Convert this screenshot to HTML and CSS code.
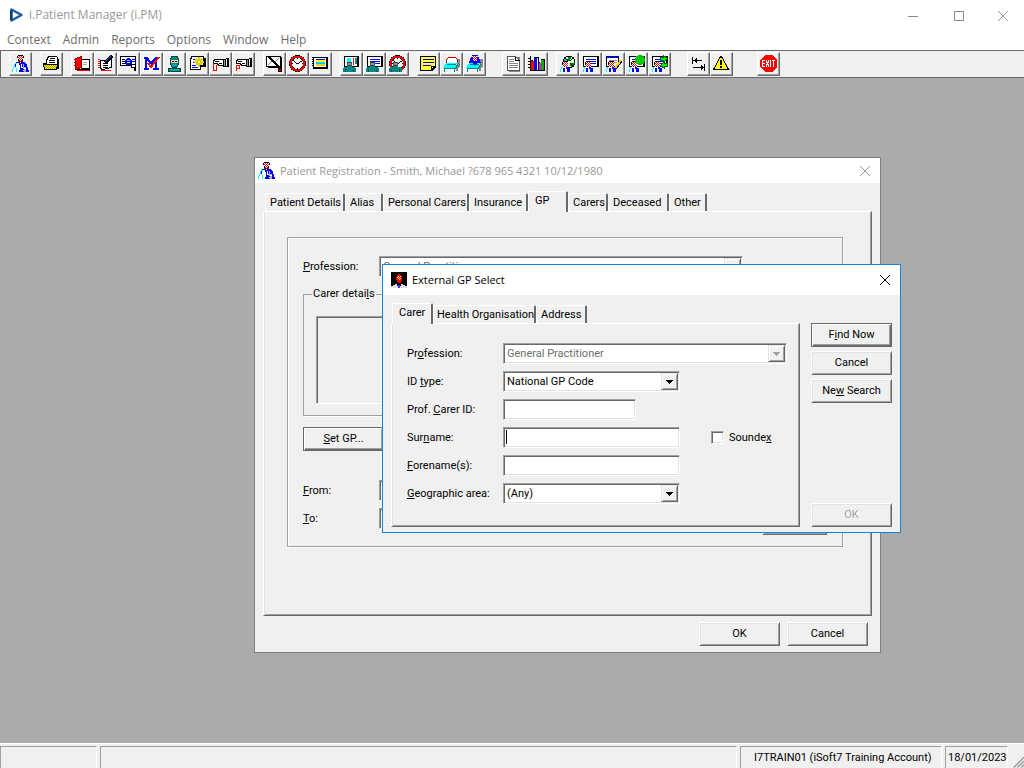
FILE: index.html
```html
<!DOCTYPE html>
<html lang="en">
<head>
    <meta charset="UTF-8">
    <meta name="viewport" content="width=device-width, initial-scale=1.0">
    <title>i.Patient Manager (i.PM)</title>
    <link rel="stylesheet" href="styles.css">
</head>
<body>
    <!-- Shared icons -->
    <svg class="defs" width="0" height="0">
        <defs>
            <pattern id="skin" width="2" height="2" patternUnits="userSpaceOnUse">
                <path fill="#fff" d="M0 0h2v2H0z"/><path fill="#f00" d="M0 0h1v1H0zM1 1h1v1H1z"/>
            </pattern>
            <pattern id="gold" width="2" height="2" patternUnits="userSpaceOnUse">
                <path fill="#ff0" d="M0 0h2v2H0z"/><path fill="#a90" d="M0 0h1v1H0zM1 1h1v1H1z"/>
            </pattern>
            <symbol id="doctor" viewBox="0 0 17 17">
                <path fill="#00f" d="M4 7h8l3 3 2 7H0l2-7z"/>
                <path fill="#0ff" d="M3 8h2v1H3zM2 9h1v3H2zM1 12h1v3H1zM0 14h1v3H0zM4 13h1v4H4z"/>
                <path fill="#fff" d="M5 8h2v2h1v4l-1 3H5v-4H4V9h1zM9 9h1v4H9zM2 12h2v5H1v-3h1z"/>
                <path fill="#aaa" d="M11 9h1v3h2v2h-3zM12 14h2v3h-2z"/>
                <path fill="#fff" d="M10 12h1v1h-1zM12 13h2v1h-2zM11 15h1v1h-1z"/>
                <path fill="url(#skin)" d="M6 1h5v6H9v1H8V7H6z"/>
                <path fill="#000" d="M6 0h5v1H6zM5 1h1v2H5zM11 1h1v2h-1zM6 4h1v2H6zM10 4h1v2h-1zM7 6h1v2H7zM9 6h1v2H9z"/>
            </symbol>
            <symbol id="nurse" viewBox="0 0 17 17">
                <path fill="#088" d="M4 7h5v5H4zM1 12h11v1h1v4H0v-4h1z"/>
                <path fill="#055" d="M4 7h5v1H4zM4 10h5v1H4zM2 14h1v3H2zM10 14h1v3h-1z"/>
                <path fill="#f66" d="M5 8h3v2H5z"/>
            </symbol>
            <symbol id="minidoc" viewBox="0 0 17 17">
                <path fill="#0ff" d="M2 12h2v2H2zM1 14h1v3H1z"/>
                <path fill="#fff" d="M3 12h6v5H2v-3h1z"/>
                <path fill="#00f" d="M7 11h2v2h2v4H8v-3H7zM4 13h2v4H4z"/>
                <path fill="url(#skin)" d="M4 7h5v5H4z"/>
                <path fill="#000" d="M4 6h5v1H4zM3 7h1v3H3zM5 11h1v1H5z"/>
            </symbol>
            <symbol id="card" viewBox="0 0 17 17">
                <path fill="#000" d="M1 1h16v11H1z"/><path fill="#fff" d="M2 2h13v9H2z"/>
                <path fill="#00f" d="M4 4h10v1H4zM4 6h10v1H4zM8 8h6v1H8z"/>
            </symbol>
            <symbol id="clock" viewBox="0 0 17 17">
                <circle cx="8.5" cy="8.5" r="7" fill="#fff" stroke="#000" stroke-width="3"/>
                <circle cx="8.5" cy="8.5" r="7" fill="none" stroke="#f00" stroke-width="2"/>
                <path fill="none" stroke="#000" d="M4 5l4 4 5-3M8.5 3v1M8.5 13v1M3 8.5h1M13 8.5h1"/>
            </symbol>
            <symbol id="hand" viewBox="0 0 17 17">
                <path fill="#fff" stroke="#000" d="M1.500 5.500l2-1h8v6h-5l-1-2h-4z"/>
                <path fill="none" stroke="#000" d="M3 6.500h4M7 8.500h3"/>
                <path fill="#999" stroke="#000" d="M11.500 4.500h2v7h-2z"/><path fill="#000" d="M14 3h3v1h-3zM15 4h2v8h-2zM14 11h1v1h-1z"/>
            </symbol>
            <symbol id="bed" viewBox="0 0 17 17">
                <path fill="#888" d="M14 4h3v7l-2 2v3h-2v-4l1-2z"/>
                <path fill="#0ff" d="M3 8h11l-2 5H0z"/>
                <path fill="none" stroke="#088" d="M.500 13.500h12l2-4M1.500 14v3M11.500 14v3M4 9.500h9"/>
            </symbol>
            <symbol id="close" viewBox="0 0 12 12">
                <path fill="none" stroke="currentColor" d="M1 1l10 10M11 1L1 11"/>
            </symbol>
            <symbol id="arrow" viewBox="0 0 7 4">
                <path fill="currentColor" d="M0 0h7v1H6v1H5v1H4v1H3V3H2V2H1V1H0z"/>
            </symbol>
        </defs>
    </svg>

    <div class="app">
        <header class="titlebar">
            <svg class="logo" viewBox="0 0 14 14"><path fill="none" stroke="#1d5c9e" stroke-width="2.500" stroke-linejoin="round" d="M2.500 1.500l10 5.500-10 5.500z"/><path stroke="#153b6b" stroke-width="2" d="M2 2v10"/></svg>
            <h1>i.Patient Manager (i.PM)</h1>
            <div class="window-buttons">
                <button type="button" aria-label="Minimize"><svg viewBox="0 0 12 12"><path stroke="#888" d="M1 6.500h10"/></svg></button>
                <button type="button" aria-label="Maximize"><svg viewBox="0 0 12 12"><path fill="none" stroke="#888" d="M1.500 1.500h9v9h-9z"/></svg></button>
                <button type="button" aria-label="Close"><svg><use href="#close"/></svg></button>
            </div>
        </header>

        <nav class="menu">
            <a href="#">Context</a>
            <a href="#">Admin</a>
            <a href="#">Reports</a>
            <a href="#">Options</a>
            <a href="#">Window</a>
            <a href="#">Help</a>
        </nav>

        <div class="toolbar">
            <div class="tools">
                <button type="button" aria-label="Patient"><svg><use href="#doctor"/></svg></button>
            </div>
            <div class="tools">
                <button type="button" aria-label="Case notes"><svg viewBox="0 0 17 17"><path fill="#fff" stroke="#000" d="M5.500 1.500h8l1 1v7h-11v-4z"/><path stroke="#000" d="M7 3.500h5M6 5.500h6M6 7.500h6"/><path fill="#000" d="M14 4h2v10h-2zM0 8h3v2H0z"/><path fill="url(#gold)" stroke="#000" d="M.500 9.500h14l-1 5h-12z"/></svg></button>
            </div>
            <div class="tools">
                <button type="button" aria-label="Open book"><svg viewBox="0 0 17 17"><path fill="#000" d="M7 4h9v12H3v-2h4z"/><path fill="#fff" d="M8 5h7v8H8z"/><path fill="#aaa" d="M9 7h4v1H9zM9 9h4v1H9z"/><path fill="#f00" stroke="#800" d="M1.500 3.500l6-2v11l-6 2z"/><path stroke="#f00" d="M3 15.500h12M1 4.500h-1M1 7.500h-1M1 10.500h-1"/></svg></button>
                <button type="button" aria-label="Write book"><svg viewBox="0 0 17 17"><path fill="#fff" stroke="#000" d="M3.500 5.500l11-1v8l-9 2-2-1z"/><path stroke="#f00" stroke-width="2" stroke-dasharray="1 1" d="M2 4v10"/><path stroke="#000" d="M6 8.500h5M6 10.500h5M6 12.500h5"/><path stroke="#f00" d="M4 15.500h10"/><path stroke="#000" stroke-width="3" d="M8 8l7-7"/><path stroke="#06f" d="M8 7l6-6"/></svg></button>
                <button type="button" aria-label="Search"><svg viewBox="0 0 17 17"><path fill="#fff" stroke="#000" d="M.500 1.500h15v9H.500z"/><path stroke="#000" d="M2 4.500h3M2 6.500h3M2 8.500h3"/><circle cx="8.500" cy="6.500" r="3.500" fill="#00f"/><path stroke="#0ff" d="M7 5.500h3"/><path stroke="#ff0" d="M7 7.500h3"/><path stroke="#00c" d="M12 4.500h3M12 6.500h3"/><path fill="#fff" stroke="#000" d="M11.500 9.500h4v6h-1v-3h-3z"/></svg></button>
                <button type="button" aria-label="Measures"><svg viewBox="0 0 17 17"><path fill="#fff" d="M0 1h17v15H0z"/><path fill="#00f" d="M1 2h4l3 5 4-5h3v2h-1v9h2v2h-6v-2h2V6l-4 4-4-4v7h2v2H1v-2h1V4H1z"/><path fill="none" stroke="#f00" stroke-width="2" d="M5 8l3 4 8-10"/></svg></button>
                <button type="button" aria-label="Surgeon"><svg viewBox="0 0 17 17"><path fill="#088" stroke="#044" d="M5.500 1.500h6l1 3v5l-2 3h-4l-2-3v-5zM2.500 13.500h12v3h-12z"/><path fill="#fca" d="M5 5h7v3H5z"/><path fill="#000" d="M6 6h2v1H6zM9 6h2v1H9z"/><path fill="#0aa" d="M6 9h5v2H6zM4 14h9v2H4z"/></svg></button>
                <button type="button" aria-label="New event"><svg viewBox="0 0 17 17"><path fill="#000" d="M2 1h13v2h2v9h-5v3H1V3h1z"/><path fill="#fff" d="M3 2h11v8h-3v4H2V4h1z"/><path stroke="#00f" d="M4 4.500h3M4 7.500h3M3 10.500h4M3 12.500h6"/><path stroke="#dc0" stroke-width="2" d="M10 2v10M5 7h10M7 4l6 6M13 4l-6 6"/><path fill="#ff8" d="M9 6h2v2H9z"/></svg></button>
                <button type="button" aria-label="Refer out"><svg viewBox="0 0 17 17"><use href="#hand"/><path fill="none" stroke="#f00" d="M1.500 8v7h3v-5"/></svg></button>
                <button type="button" aria-label="Refer in"><svg viewBox="0 0 17 17"><use href="#hand"/><path fill="none" stroke="#f00" d="M1.500 16v-6h3v3h-3"/></svg></button>
            </div>
            <div class="tools">
                <button type="button" aria-label="Letter"><svg viewBox="0 0 17 17"><path fill="#000" d="M2 2h14v11H2z"/><path fill="#fff" d="M1 2h13v9H1z"/><path fill="none" stroke="#000" d="M.500 1.500h14v10H.500z"/><path fill="none" stroke="#777" d="M2 10l4-4M9 7l4-4"/><path stroke="#000" stroke-width="2" d="M3 2l11 11"/><path fill="#d00" stroke="#000" d="M12.500 13.500h3v3h-3z"/></svg></button>
                <button type="button" aria-label="Appointments"><svg><use href="#clock"/></svg></button>
                <button type="button" aria-label="Schedule"><svg viewBox="0 0 17 17"><path fill="#000" d="M1 2h15v12H1z"/><path fill="#fff" d="M2 3h12v9H2z"/><path stroke="#000" stroke-width="2" stroke-dasharray="1 1" d="M1 2v10"/><path fill="#00f" d="M4 4h9v1H4z"/><path fill="#ff0" d="M4 5h9v2H4z"/><path fill="#0cf" d="M4 7h9v2H4z"/><path fill="#fc0" d="M4 9h9v2H4z"/></svg></button>
            </div>
            <div class="tools">
                <button type="button" aria-label="Clinic list"><svg viewBox="0 0 17 17"><path fill="#000" d="M1 1h15v11H1z"/><path fill="#fff" d="M2 2h12v9H2z"/><path fill="#0ff" d="M4 3h4v4H4z"/><path fill="#f00" d="M10 3h1v7h-1z"/><path fill="#088" d="M12 3h2v6h-2z"/><use href="#nurse"/></svg></button>
                <button type="button" aria-label="Clinic card"><svg viewBox="0 0 17 17"><use href="#card"/><use href="#nurse"/></svg></button>
                <button type="button" aria-label="Clinic time"><svg viewBox="0 0 17 17"><use href="#clock"/><use href="#nurse"/></svg></button>
            </div>
            <div class="tools">
                <button type="button" aria-label="Notes"><svg viewBox="0 0 17 17"><path fill="#000" d="M0 1h16v11l-4 4H0z"/><path fill="#ff4" d="M1 2h14v9h-4v4H1z"/><path fill="#00a" d="M3 4h11v1H3zM3 7h11v1H3zM3 10h8v1H3z"/><path fill="#fff" d="M12 12h1v1h-1z"/></svg></button>
                <button type="button" aria-label="Bed"><svg viewBox="0 0 17 17"><use href="#bed"/><path fill="#fff" stroke="#b00" d="M3.500 7.500v-3l2-2h7l2 2v2"/></svg></button>
                <button type="button" aria-label="Inpatient"><svg viewBox="0 0 17 17"><use href="#bed"/><path fill="#00f" d="M5 2h8l2 6h-4l-2 3-2-3H3z"/><path fill="url(#skin)" d="M7 1h4v5H7z"/><path fill="#00c" d="M6 0h6v1H6z"/></svg></button>
            </div>
            <div class="tools wide">
                <button type="button" aria-label="Document"><svg viewBox="0 0 17 17"><path fill="#888" d="M4 2h11v15H4z"/><path fill="#fff" stroke="#555" d="M2.500 1.500h8l4 4v10h-12z"/><path fill="none" stroke="#000" d="M10.500 2v3.500h4"/><path fill="#888" d="M4 4h5v1H4zM4 6h5v1H4zM4 8h9v1H4zM4 10h9v1H4zM4 12h9v1H4z"/></svg></button>
                <button type="button" aria-label="Statistics"><svg viewBox="0 0 17 17"><path fill="#f00" d="M3 6h3v9H3z"/><path fill="#00f" d="M6 3h3v12H6z"/><path fill="#f0f" d="M10 8h3v7h-3z"/><path fill="#0a0" d="M13 5h3v10h-3z"/><path fill="none" stroke="#000" d="M2.500 1v14.500H17M0 3.500h2M0 6.500h2M0 9.500h2M0 12.500h2M6 2.500h4v12M13 4.500h3.500v11M10 7.500h2M3 5.500h2"/></svg></button>
            </div>
            <div class="tools">
                <button type="button" aria-label="Pathology"><svg viewBox="0 0 17 17"><circle cx="10" cy="7" r="6" fill="#cfc" stroke="#000"/><path fill="#080" d="M9 2h3l-1 4H8zM12 8h4l-3 4-2-1z"/><path fill="#0cc" d="M5 4h2l2 3H5z"/><path stroke="#000" d="M6 3l8 8M14 3L6 11"/><circle cx="10" cy="7" r="1.500" fill="#fff"/><use href="#minidoc"/></svg></button>
                <button type="button" aria-label="Patient card"><svg viewBox="0 0 17 17"><use href="#card"/><use href="#minidoc"/></svg></button>
                <button type="button" aria-label="Edit card"><svg viewBox="0 0 17 17"><path fill="#fff" stroke="#000" d="M1.500 1.500h12v10h-12z"/><path fill="#00a" d="M1 1h13v2H1z"/><path fill="#888" d="M4 5h8v1H4zM4 7h8v1H4z"/><path stroke="#000" stroke-width="3" d="M10 14l6-8"/><path stroke="#fc0" stroke-width="2" d="M10 13l6-8"/><use href="#minidoc"/></svg></button>
                <button type="button" aria-label="Patient status"><svg viewBox="0 0 17 17"><use href="#card"/><use href="#minidoc"/><circle cx="12" cy="5" r="5" fill="#0b0"/><path stroke="#0f0" stroke-dasharray="1 1" d="M8 3.500h8M7 5.500h9M8 7.500h8"/></svg></button>
                <button type="button" aria-label="Transfer patient"><svg viewBox="0 0 17 17"><use href="#card"/><use href="#minidoc"/><path fill="#0e0" stroke="#060" d="M9.500 2.500h3v-2l4 3-4 4v-2h-3zM16.500 8.500h-3v-2l-4 4 4 3v-2h3z"/></svg></button>
            </div>
            <div class="tools wide">
                <button type="button" aria-label="Tab order"><svg viewBox="0 0 17 17"><path fill="#000" d="M2 2h1v7H2zM3 5h9v1H3zM6 3h1v5H6zM5 4h1v3H5zM14 9h1v7h-1zM3 12h11v1H3zM11 10h1v5h-1zM12 11h1v3h-1z"/></svg></button>
                <button type="button" aria-label="Alerts"><svg viewBox="0 0 17 17"><path fill="#777" d="M9 2l8 13H3z"/><path fill="#ff0" stroke="#000" d="M7.500 1.500h1l7 13H.500z"/><path fill="#000" d="M7 5h2v5H7zM7 11h2v2H7z"/></svg></button>
            </div>
            <div class="tools wider">
                <button type="button" aria-label="Exit"><svg viewBox="0 0 17 17"><path fill="#f00" d="M5 0h7l5 5v7l-5 5H5l-5-5V5z"/><path fill="none" stroke="#fff" d="M4.500 5.500h-2v6h2M2.500 8.500h2M6 5.500l3 6M9 5.500l-3 6M10.500 5v7M12 5.500h3M13.500 5v7"/></svg></button>
            </div>
        </div>

        <main class="desktop">
            <section class="window registration">
                <header class="window-title">
                    <svg><use href="#doctor"/></svg>
                    <h2>Patient Registration - Smith, Michael ?678 965 4321 10/12/1980</h2>
                    <button type="button" class="close" aria-label="Close"><svg><use href="#close"/></svg></button>
                </header>
                <div class="tabs">
                    <button type="button">Patient Details</button>
                    <button type="button">Alias</button>
                    <button type="button">Personal Carers</button>
                    <button type="button">Insurance</button>
                    <button type="button" class="active">GP</button>
                    <button type="button">Carers</button>
                    <button type="button">Deceased</button>
                    <button type="button">Other</button>
                </div>
                <div class="tab-page">
                    <div class="group">
                        <div class="row">
                            <label for="regProfession"><u>P</u>rofession:</label>
                            <span class="combo off long">
                                <select id="regProfession" disabled><option>General Practitioner</option></select>
                                <span class="drop"><svg><use href="#arrow"/></svg></span>
                            </span>
                        </div>
                        <fieldset class="carer">
                            <legend>Carer detai<u>l</u>s</legend>
                            <div class="carer-box"></div>
                        </fieldset>
                        <button type="button" class="btn default"><u>S</u>et GP...</button>
                        <div class="dates">
                            <div class="row">
                                <label for="from"><u>F</u>rom:</label>
                                <input type="text" id="from">
                            </div>
                            <div class="row">
                                <label for="to"><u>T</u>o:</label>
                                <input type="text" id="to">
                                <button type="button" class="btn history" aria-label="History"></button>
                            </div>
                        </div>
                    </div>
                </div>
                <footer class="window-footer">
                    <button type="button" class="btn">OK</button>
                    <button type="button" class="btn">Cancel</button>
                </footer>
            </section>

            <section class="window select-gp">
                <header class="window-title">
                    <svg viewBox="0 0 16 16"><path fill="#000" d="M0 0h16v16H0z"/><path fill="#f00" d="M7 2h2v1h1v1h1v5h-1v2H7v-1H6V8H5V5h1V3h1z"/><path fill="#fe4" d="M7 4h1v1H7zM9 4h1v1H9zM6 5h1v1H6zM8 5h1v1H8zM7 6h1v1H7zM9 6h1v1H9zM8 7h1v1H8z"/><path fill="#ddd" d="M0 14h2v-1h2v-1h2v2h1v2H0zM10 12h2v1h2v1h2v2H9v-2h1z"/><path fill="#33f" d="M7 13h2v3H7z"/></svg>
                    <h2>External GP Select</h2>
                    <button type="button" class="close" aria-label="Close"><svg><use href="#close"/></svg></button>
                </header>
                <form class="select-body">
                    <div class="search">
                        <div class="tabs">
                            <button type="button" class="active">Carer</button>
                            <button type="button">Health Organisation</button>
                            <button type="button">Address</button>
                        </div>
                        <div class="tab-page">
                            <div class="row">
                                <label for="profession">Pr<u>o</u>fession:</label>
                                <span class="combo off full">
                                    <select id="profession" disabled><option>General Practitioner</option></select>
                                    <span class="drop"><svg><use href="#arrow"/></svg></span>
                                </span>
                            </div>
                            <div class="row">
                                <label for="idType">ID <u>t</u>ype:</label>
                                <span class="combo">
                                    <select id="idType"><option>National GP Code</option></select>
                                    <span class="drop"><svg><use href="#arrow"/></svg></span>
                                </span>
                            </div>
                            <div class="row">
                                <label for="carerId">Prof. <u>C</u>arer ID:</label>
                                <input type="text" id="carerId" class="short">
                            </div>
                            <div class="row">
                                <label for="surname">Sur<u>n</u>ame:</label>
                                <input type="text" id="surname" class="current">
                                <span class="check">
                                    <input type="checkbox" id="soundex">
                                    <label for="soundex">Sounde<u>x</u></label>
                                </span>
                            </div>
                            <div class="row">
                                <label for="forename"><u>F</u>orename(s):</label>
                                <input type="text" id="forename">
                            </div>
                            <div class="row">
                                <label for="area"><u>G</u>eographic area:</label>
                                <span class="combo">
                                    <select id="area"><option>(Any)</option></select>
                                    <span class="drop"><svg><use href="#arrow"/></svg></span>
                                </span>
                            </div>
                        </div>
                    </div>
                    <div class="actions">
                        <button type="button" class="btn default">F<u>i</u>nd Now</button>
                        <button type="button" class="btn">Cancel</button>
                        <button type="button" class="btn">Ne<u>w</u> Search</button>
                        <button type="button" class="btn last" disabled>OK</button>
                    </div>
                </form>
            </section>
        </main>

        <footer class="status">
            <span class="first"></span>
            <span class="message"></span>
            <span class="account">I7TRAIN01 (iSoft7 Training Account)</span>
            <span class="date">18/01/2023</span>
            <svg class="grip" viewBox="0 0 14 14"><path stroke="#999" stroke-width="1.500" d="M3 14L14 3M7 14l7-7M11 14l3-3"/></svg>
        </footer>
    </div>
</body>
</html>
```
FILE: styles.css
```css
* {
    box-sizing: border-box;
}
body {
    margin: 0;
    font-family: Roboto, "Liberation Sans", sans-serif;
    font-size: 11px;
    line-height: 14px;
    color: #000;
    background: #ababab;
}
button, input, select {
    font: inherit;
    color: inherit;
    margin: 0;
}
h1, h2 {
    margin: 0;
    font-weight: normal;
}
.defs {
    position: absolute;
}
.app {
    display: flex;
    flex-direction: column;
    height: 100vh;
}

/* Title bar and menu */
.titlebar, .menu, .window-title {
    font-family: "Open Sans", "Noto Sans", sans-serif;
    font-size: 12px;
    line-height: 16px;
    background: #fff;
}
h1 {
    font-size: 12px;
}
h2 {
    font-size: 11px;
}
.titlebar {
    display: flex;
    align-items: center;
    height: 30px;
    padding-left: 9px;
    color: #999;
}
.titlebar .logo {
    width: 14px;
    height: 14px;
    margin-right: 6px;
}
.window-buttons {
    display: flex;
    margin-left: auto;
}
.window-buttons button {
    width: 46px;
    height: 28px;
    padding: 0;
    border: none;
    background: none;
}
.window-buttons button:last-child {
    width: 42px;
}
.window-buttons svg {
    width: 12px;
    height: 12px;
    vertical-align: middle;
}
.menu {
    display: flex;
    gap: 12px;
    height: 20px;
    padding: 2px 7px;
}
.menu a {
    color: #6d6d6d;
    text-decoration: none;
}

/* Toolbar */
.toolbar {
    display: flex;
    gap: 8px;
    height: 28px;
    padding: 1px 8px;
    background: #f0f0f0;
    border: 1px solid #696969;
    border-right: none;
}
.tools {
    display: flex;
}
.tools.wide {
    margin-left: 8px;
}
.tools.wider {
    margin-left: 16px;
}
.tools button {
    display: flex;
    width: 23px;
    height: 24px;
    padding: 2px;
    background: #f0f0f0;
    border: 1px solid #fff;
    border-right-color: #696969;
    border-bottom-color: #696969;
    box-shadow: inset -1px -1px #a0a0a0;
}
.tools svg {
    width: 17px;
    height: 17px;
    shape-rendering: crispEdges;
}

/* Windows */
.desktop {
    flex: 1;
    position: relative;
}
.window {
    position: absolute;
    display: flex;
    flex-direction: column;
    background: #f0f0f0;
}
.registration {
    left: 254px;
    top: 79px;
    width: 627px;
    height: 496px;
    border: 1px solid #7f7f7f;
}
.select-gp {
    left: 382px;
    top: 186px;
    width: 519px;
    height: 269px;
    border: 1px solid #1883d7;
}
.window-title {
    display: flex;
    align-items: center;
    flex: none;
}
.window-title svg {
    width: 16px;
    height: 16px;
    shape-rendering: crispEdges;
}
.window-title h2 {
    flex: 1;
    margin-left: 5px;
}
.registration .window-title {
    height: 25px;
    padding: 0 9px 0 3px;
    color: #999;
}
.registration .window-title > svg {
    width: 17px;
    height: 17px;
}
.select-gp .window-title {
    height: 30px;
    padding: 0 9px 0 8px;
}
.close {
    display: flex;
    padding: 0;
    border: none;
    background: none;
}
.window-title .close svg {
    width: 12px;
    height: 12px;
    shape-rendering: auto;
}

/* Tabs */
.tabs {
    display: grid;
    align-items: end;
    height: 20px;
    margin: 0 2px;
}
.tabs button {
    height: 18px;
    padding: 0 0 0 4px;
    text-align: left;
    white-space: nowrap;
    background: #f0f0f0;
    border: 1px solid #fff;
    border-right: 2px solid #696969;
    border-bottom: none;
    border-radius: 2px 2px 0 0;
}
.tabs .active {
    z-index: 1;
    height: 21px;
    margin-bottom: -1px;
    padding: 0 0 3px 6px;
}
.registration .tabs {
    grid-template-columns: 80px 38px 86px 59px 40px 40px 61px 38px;
    margin: 8px 10px 0;
}
.select-gp .tabs {
    grid-template-columns: 41px 103px 51px;
    margin-left: 1px;
}
.select-gp .tabs button:nth-child(2) {
    padding-left: 3px;
}
.tab-page {
    border: 1px solid #fff;
    border-right-color: #696969;
    border-bottom-color: #696969;
    box-shadow: inset 1px 0 #e3e3e3, inset -1px -1px #a0a0a0;
}
.registration .tab-page {
    flex: 1;
    margin: 0 8px;
    padding: 25px 28px 0 23px;
}

/* Form pieces */
.group {
    height: 310px;
    padding: 18px 15px;
    border: 1px solid #a0a0a0;
    box-shadow: 1px 1px #fff, inset 1px 1px #fff;
}
.row {
    display: flex;
    align-items: center;
    height: 21px;
    margin-bottom: 7px;
}
.row > label {
    flex: none;
    width: 96px;
}
.group .row > label {
    width: 76px;
}
input[type="text"], .combo {
    width: 177px;
    height: 21px;
    padding: 0 2px;
    background: #fff;
    border: 1px solid #a0a0a0;
    border-right-color: #fff;
    border-bottom-color: #fff;
    border-radius: 0;
    outline: none;
    box-shadow: inset 1px 1px #696969, inset -1px -1px #e3e3e3;
}
input.short {
    width: 133px;
}
/* text cursor of the field being edited */
input.current {
    background: #fff linear-gradient(#000, #000) 2px 2px / 1px 14px no-repeat;
    caret-color: transparent;
}
.combo {
    display: flex;
    padding: 1px 1px 1px 3px;
}
.combo.full {
    width: auto;
    flex: 1;
}
.combo.long {
    width: 364px;
}
.combo select {
    flex: 1;
    min-width: 0;
    padding: 0;
    border: none;
    background: none;
    appearance: none;
    outline: none;
    opacity: 1;
}
.drop {
    display: flex;
    align-items: center;
    justify-content: center;
    width: 17px;
    background: #f0f0f0;
    border: 1px solid #e3e3e3;
    border-right-color: #696969;
    border-bottom-color: #696969;
    box-shadow: inset 1px 1px #fff, inset -1px -1px #a0a0a0;
    pointer-events: none;
}
.drop svg {
    width: 7px;
    height: 4px;
    shape-rendering: crispEdges;
}
.off {
    color: #6d6d6d;
}
.off .drop {
    color: #a0a0a0;
}
.btn {
    width: 81px;
    height: 24px;
    padding: 0;
    text-align: center;
    background: #f0f0f0;
    border: 1px solid #fff;
    border-right-color: #696969;
    border-bottom-color: #696969;
    box-shadow: inset 1px 1px #e3e3e3, inset -1px -1px #a0a0a0;
}
.btn.default {
    border-color: #696969;
    box-shadow: inset 1px 1px #fff, inset -1px -1px #696969, inset -2px -2px #a0a0a0;
}
.btn:disabled {
    color: #a0a0a0;
    text-shadow: 1px 1px #fff;
}

/* Patient registration */
.carer {
    height: 129px;
    margin: 10px 0 11px;
    padding: 15px 12px 0;
    border: 1px solid #a0a0a0;
    box-shadow: 1px 1px #fff;
}
.carer legend {
    margin-left: -4px;
    padding: 0 1px;
}
.carer-box {
    height: 88px;
    border: 1px solid #a0a0a0;
    border-right-color: #fff;
    border-bottom-color: #fff;
    box-shadow: inset 1px 1px #696969;
}
.dates {
    margin-top: 29px;
}
.history {
    align-self: flex-start;
    width: 65px;
    margin: 3px 0 0 auto;
}
.window-footer {
    display: flex;
    justify-content: flex-end;
    gap: 7px;
    padding: 6px 12px;
}

/* External GP select */
.select-body {
    display: flex;
    flex: 1;
    gap: 11px;
    padding: 8px 8px 5px;
}
.search {
    display: flex;
    flex-direction: column;
    flex: 1;
}
.search .tab-page {
    flex: 1;
    padding: 19px 12px 0 15px;
}
.check {
    display: flex;
    align-items: center;
    gap: 5px;
    margin-left: 31px;
}
.check input {
    width: 13px;
    height: 13px;
    appearance: none;
    background: #fff;
    border: 1px solid #a0a0a0;
    border-right-color: #fff;
    border-bottom-color: #fff;
    box-shadow: inset 1px 1px #696969, inset -1px -1px #e3e3e3;
}
.actions {
    display: flex;
    flex-direction: column;
    gap: 4px;
    padding-top: 20px;
}
.actions .last {
    margin-top: auto;
}

/* Status bar */
.status {
    display: flex;
    gap: 3px;
    height: 25px;
    padding-top: 2px;
    line-height: 22px;
    background: #f0f0f0;
    border-top: 1px solid #fff;
}
.status span {
    border-top: 1px solid #a0a0a0;
    border-left: 1px solid #a0a0a0;
    border-right: 1px solid #fff;
    white-space: nowrap;
}
.status .first {
    width: 97px;
}
.status .message {
    flex: 1;
}
.status .account {
    width: 202px;
    padding-left: 13px;
}
.status .date {
    width: 63px;
    padding-left: 2px;
}
.grip {
    width: 13px;
    height: 14px;
    align-self: flex-end;
}
```
